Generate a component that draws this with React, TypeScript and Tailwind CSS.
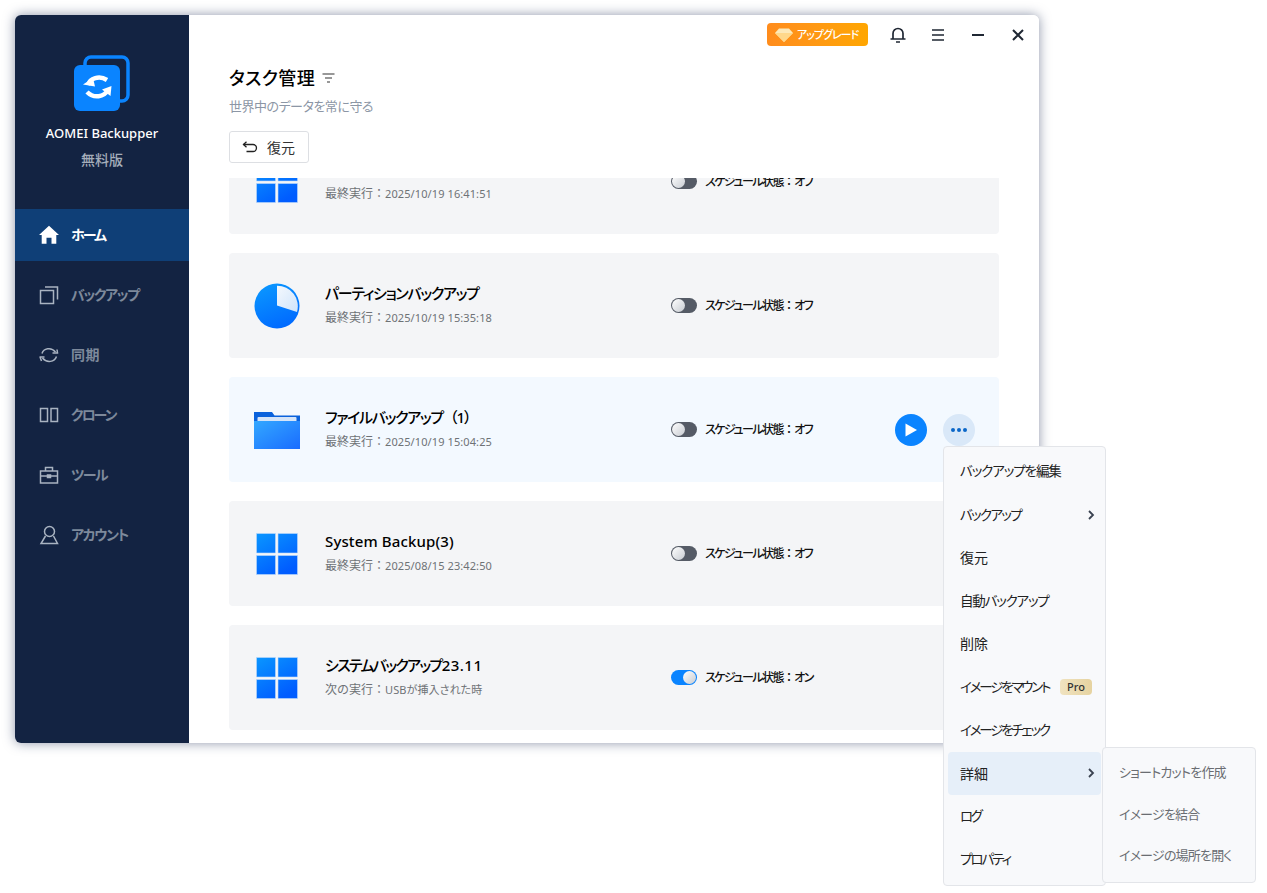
import React from 'react';

const WindowsIcon: React.FC<{ id: string }> = ({ id }) => (
    <svg width="42" height="42" viewBox="0 0 42 42">
        <defs>
            <linearGradient id={id} x1="0" y1="0" x2="0.6" y2="1">
                <stop offset="0" stopColor="#0a96ff" />
                <stop offset="1" stopColor="#005cff" />
            </linearGradient>
        </defs>
        <path fill={`url(#${id})`} stroke="#bcd9fb" strokeWidth="0.6" d="M0.5 0.5h19v19.5h-19zM22 0.5h19.500v19.500H22zM0.500 22.500h19v19h-19zM22 22.500h19.500v19H22z" />
    </svg>
);

const PieIcon = () => (
    <svg width="46" height="46" viewBox="0 0 46 46">
        <defs>
            <linearGradient id="pieBlue" x1="0.3" y1="0" x2="0.7" y2="1">
                <stop offset="0" stopColor="#0a96ff" />
                <stop offset="1" stopColor="#0068ff" />
            </linearGradient>
            <linearGradient id="pieLight" x1="0" y1="0" x2="1" y2="1">
                <stop offset="0" stopColor="#f4f8fd" />
                <stop offset="1" stopColor="#cfe4fb" />
            </linearGradient>
        </defs>
        <circle cx="23" cy="23" r="22.500" fill="url(#pieBlue)" />
        <path d="M23 2.800A20.500 20.500 0 0 1 43 29L23 22.500Z" fill="url(#pieLight)" />
    </svg>
);

const FolderIcon = () => (
    <svg width="46" height="38" viewBox="0 0 46 38">
        <defs>
            <linearGradient id="folderFront" x1="0" y1="0" x2="1" y2="1">
                <stop offset="0" stopColor="#33a8ff" />
                <stop offset="1" stopColor="#1a6cff" />
            </linearGradient>
        </defs>
        <path d="M0 1h18l2.500 3.500H46V20H0Z" fill="#0a62dc" />
        <rect x="3.500" y="6" width="39" height="8" rx="1" fill="#d4e4f8" />
        <path d="M0 10h46V38H0Z" fill="url(#folderFront)" />
    </svg>
);

const LogoIcon = () => (
    <svg width="56" height="56" viewBox="0 0 56 56">
        <rect x="11" y="2" width="43" height="44" rx="6" fill="none" stroke="#0a84ff" strokeWidth="3.500" />
        <rect x="0" y="10" width="46" height="46" rx="6" fill="#0a84ff" />
        <path d="M14 30C16 23.500 25 20 33 25" fill="none" stroke="#fff" strokeWidth="4.500" />
        <path d="M9 29.500l10-6.500 2 8.500z" fill="#fff" />
        <path d="M13 37C20 44 30 42 34 35" fill="none" stroke="#fff" strokeWidth="4.500" />
        <path d="M37.500 31l-1 10-8.500-6.500z" fill="#fff" />
    </svg>
);

const HomeIcon = () => (
    <svg width="20" height="20" viewBox="0 0 20 20" fill="#fff">
        <path d="M10 0.800L20 10h-2.700v8.800h-4.800v-6h-5v6H2.700V10H0Z" />
    </svg>
);

const BackupIcon = () => (
    <svg width="20" height="20" viewBox="0 0 20 20" fill="none" stroke="currentColor" strokeWidth="1.500">
        <rect x="1.500" y="5.500" width="13" height="13" />
        <path d="M6 2h12.500v12.500" />
    </svg>
);

const SyncIcon = () => (
    <svg width="20" height="20" viewBox="0 0 20 20" fill="none" stroke="currentColor" strokeWidth="1.500">
        <path d="M3 8.500C4.500 3.500 12 1.500 16.500 7" />
        <path d="M17.500 11.500C15.500 17 8 18.500 3.500 13" />
        <path d="M13.500 8h5v-.200L18 4.500M0.500 12h5M1 12l1.500 4" />
    </svg>
);

const CloneIcon = () => (
    <svg width="20" height="20" viewBox="0 0 20 20" fill="none" stroke="currentColor" strokeWidth="1.500">
        <rect x="1.500" y="3.500" width="7" height="13" />
        <rect x="12" y="3.500" width="6.500" height="13" />
    </svg>
);

const ToolIcon = () => (
    <svg width="20" height="20" viewBox="0 0 20 20" fill="none" stroke="currentColor" strokeWidth="1.500">
        <rect x="1.500" y="6" width="17" height="12" />
        <path d="M6.500 6V2.500h7V6M1.500 11h17" />
        <rect x="8.500" y="10" width="3" height="2.500" fill="currentColor" />
    </svg>
);

const UserIcon = () => (
    <svg width="20" height="20" viewBox="0 0 20 20" fill="none" stroke="currentColor" strokeWidth="1.500">
        <circle cx="10.500" cy="6.500" r="5" />
        <path d="M6.500 11L2 18.500h16.500L14.500 11" />
    </svg>
);

const navItems = [
    { label: 'バックアップ', icon: <BackupIcon />, cls: 'tracking-[-1.400px]' },
    { label: '同期', icon: <SyncIcon />, cls: 'tracking-[0.500px]' },
    { label: 'クローン', icon: <CloneIcon />, cls: 'tracking-[-2px]' },
    { label: 'ツール', icon: <ToolIcon />, cls: 'tracking-[-1.500px]' },
    { label: 'アカウント', icon: <UserIcon />, cls: 'tracking-[-1.400px]' },
];

const Toggle: React.FC<{ on?: boolean }> = ({ on }) => (
    <div className={`w-[26px] h-[15px] rounded-full flex items-center px-px ${on ? 'bg-[#0a84ff] justify-end' : 'bg-[#555b66] justify-start'}`}>
        <div className="w-[13px] h-[13px] rounded-full bg-gradient-to-br from-white to-[#c8ccd2]" />
    </div>
);

type Task = { title: React.ReactNode; label: string; value: string; on?: boolean; icon: React.ReactNode; active?: boolean };

const tasks: Task[] = [
    { title: '', label: '最終実行：', value: '2025/10/19 16:41:51', icon: <WindowsIcon id="win0" /> },
    {
        title: <span className="tracking-[-1.300px]">パーティションバックアップ</span>,
        label: '最終実行：',
        value: '2025/10/19 15:35:18',
        icon: <PieIcon />,
    },
    {
        title: (
            <>
                <span className="tracking-[-1.300px]">ファイルバックアップ</span>
                <span className="[font-feature-settings:normal] tracking-[-1.500px]">（1）</span>
            </>
        ),
        label: '最終実行：',
        value: '2025/10/19 15:04:25',
        icon: <FolderIcon />,
        active: true,
    },
    {
        title: <span className="tracking-[0.130px]">System Backup(3)</span>,
        label: '最終実行：',
        value: '2025/08/15 23:42:50',
        icon: <WindowsIcon id="win1" />,
    },
    {
        title: (
            <>
                <span className="tracking-[-1.700px]">システムバックアップ</span>
                <span className="tracking-[0.500px]">23.11</span>
            </>
        ),
        label: '次の実行：',
        value: 'USBが挿入された時',
        icon: <WindowsIcon id="win2" />,
        on: true,
    },
];

const menuItems = [
    { label: 'バックアップを編集', cls: 'text-[13.500px] tracking-[-1.100px]' },
    { label: 'バックアップ', cls: 'text-[13.500px] tracking-[-1.700px]' },
    { label: '復元', cls: 'text-[14px]' },
    { label: '自動バックアップ', cls: 'text-[13.500px] tracking-[-1.200px]' },
    { label: '削除', cls: 'text-[14px]' },
    { label: 'イメージをマウント', cls: 'text-[13.500px] tracking-[-2.200px]' },
    { label: 'イメージをチェック', cls: 'text-[13.500px] tracking-[-2.200px]' },
    { label: '詳細', cls: 'text-[14px]' },
    { label: 'ログ', cls: 'text-[13.500px] tracking-[-2.500px]' },
    { label: 'プロパティ', cls: 'text-[13.500px] tracking-[-2px]' },
];

const Chevron = () => (
    <svg width="8" height="10" viewBox="0 0 8 10" fill="none" stroke="#3a4250" strokeWidth="1.800">
        <path d="M2 1l4 4-4 4" />
    </svg>
);

const App: React.FC = () => {
    return (
        <div className="relative h-[893px] overflow-hidden bg-white pl-[15px] pt-[15px] font-['Noto_Sans','Noto_Sans_CJK_JP',sans-serif] [font-feature-settings:'palt']">
            <div className="flex w-[1024px] h-[728px] rounded-md overflow-hidden shadow-[0_0_12px_rgba(30,45,85,0.5)]">
                <aside className="w-[174px] shrink-0 bg-[#132342] flex flex-col">
                    <div className="flex flex-col items-center pt-[40px]">
                        <div className="mr-[1px]"><LogoIcon /></div>
                        <div className="mt-[12px] text-[13px] leading-[20px] font-medium text-white">AOMEI Backupper</div>
                        <div className="mt-[7px] text-[14px] leading-[20px] font-medium text-[#a4adba]">無料版</div>
                    </div>
                    <nav className="mt-[35px] flex flex-col">
                        <div className="h-[52px] my-[4px] flex items-center gap-[12px] pl-[24px] bg-[#0f3f77] text-white">
                            <HomeIcon />
                            <span className="pb-[2px] text-[14px] font-bold tracking-[-2px]">ホーム</span>
                        </div>
                        {navItems.map(item => (
                            <div key={item.label} className="h-[52px] my-[4px] flex items-center gap-[12px] pl-[24px] text-[#a9b3c1]">
                                {item.icon}
                                <span className={`pb-[2px] text-[14px] font-bold text-[#7d899b] ${item.cls}`}>{item.label}</span>
                            </div>
                        ))}
                    </nav>
                </aside>

                <main className="flex-1 bg-white flex flex-col min-w-0">
                    <div className="h-[163px] shrink-0 relative pl-[40px]">
                        <div className="absolute top-[8px] right-[14px] flex items-center">
                            <div className="h-[23px] w-[101px] rounded-[4px] bg-gradient-to-r from-[#ff8c1c] to-[#ffa600] flex items-center pl-[8px] gap-[4px]">
                                <svg width="18" height="14" viewBox="0 0 18 14">
                                    <path d="M4 0.500h10l4 4.500-9 9-9-9z" fill="#fde9b8" />
                                    <path d="M0 5h18l-9 9z" fill="#ffd88a" />
                                </svg>
                                <span className="text-[11px] leading-none text-white font-medium tracking-[-1px]">アップグレード</span>
                            </div>
                            <svg className="ml-[21px]" width="18" height="18" viewBox="0 0 18 18" fill="none" stroke="#1f2733" strokeWidth="1.700">
                                <path d="M4 12.500V7.500a5 5 0 0 1 10 0v5M1.500 13h15" />
                                <path d="M7 16h4" />
                            </svg>
                            <svg className="ml-[24px]" width="14" height="14" viewBox="0 0 14 14" fill="none" stroke="#1f2733" strokeWidth="1.700">
                                <path d="M1 2h12M1 7h12M1 12h12" />
                            </svg>
                            <svg className="ml-[26px]" width="14" height="14" viewBox="0 0 14 14" fill="none" stroke="#1f2733" strokeWidth="1.800">
                                <path d="M1 7h12" />
                            </svg>
                            <svg className="ml-[26px]" width="14" height="14" viewBox="0 0 14 14" fill="none" stroke="#1f2733" strokeWidth="2">
                                <path d="M2 2l10 10M12 2L2 12" />
                            </svg>
                        </div>
                        <div className="pt-[50px] flex items-center gap-[7px]">
                            <h1 className="text-[18px] leading-[26px] font-medium text-black tracking-[0.400px]">タスク管理</h1>
                            <svg width="13" height="10" viewBox="0 0 13 10" fill="none" stroke="#333" strokeWidth="1.200">
                                <path d="M0.500 1h12M3 5h7M5 9h3" />
                            </svg>
                        </div>
                        <p className="mt-[5px] text-[13px] leading-[20px] text-[#8c96a5] tracking-[-0.500px]">世界中のデータを常に守る</p>
                        <button className="mt-[15px] h-[32px] w-[80px] border border-[#dddfe3] rounded-[3px] flex items-center pl-[12px] gap-[9px] text-[14px] text-[#333]">
                            <svg width="16" height="12" viewBox="0 0 16 12" fill="none" stroke="#222" strokeWidth="1.300">
                                <path d="M1.500 3.500H11a3.500 3.500 0 0 1 0 7H4.500" />
                                <path d="M4.500 0.800L1.500 3.500l3 2.700" />
                            </svg>
                            復元
                        </button>
                    </div>

                    <div className="flex-1 overflow-hidden pl-[40px]">
                        <div className="mt-[-49px] w-[770px] flex flex-col gap-[19px]">
                            {tasks.map((task, index) => (
                                <div key={index} className={`h-[105px] rounded-[4px] flex items-center pl-[25px] pr-[24px] ${task.active ? 'bg-[#f3f9ff]' : 'bg-[#f4f5f7]'}`}>
                                    <div className="w-[46px] flex justify-center">{task.icon}</div>
                                    <div className="ml-[25px] w-[346px]">
                                        <div className="text-[15px] leading-[24px] font-medium text-black h-[24px] mb-px">{task.title}</div>
                                        <div className="text-[12px] leading-[24px] text-[#6e7276]">
                                            <span className="[font-feature-settings:normal]">{task.label}</span>
                                            <span className="text-[11px] tracking-[0.100px]">{task.value}</span>
                                        </div>
                                    </div>
                                    <Toggle on={task.on} />
                                    <span className="ml-[8px] text-[12px] font-medium text-[#111] tracking-[-1.500px]">
                                        スケジュール状態<span className="[font-feature-settings:normal] tracking-[-1px]">：</span>{task.on ? 'オン' : 'オフ'}
                                    </span>
                                    {task.active && (
                                        <div className="ml-auto flex gap-[16px]">
                                            <div className="w-[32px] h-[32px] rounded-full bg-[#0a84ff] flex items-center justify-center">
                                                <svg width="14" height="14" viewBox="0 0 14 14"><path d="M1.500 0.500L13 7 1.500 13.500Z" fill="#fff" /></svg>
                                            </div>
                                            <div className="w-[32px] h-[32px] rounded-full bg-[#d9e8f8] flex items-center justify-center gap-[2px]">
                                                <span className="w-[4px] h-[4px] rounded-full bg-[#0a66c8]" />
                                                <span className="w-[4px] h-[4px] rounded-full bg-[#0a66c8]" />
                                                <span className="w-[4px] h-[4px] rounded-full bg-[#0a66c8]" />
                                            </div>
                                        </div>
                                    )}
                                </div>
                            ))}
                        </div>
                    </div>
                </main>
            </div>

            <div className="absolute left-[943px] top-[446px] w-[163px] h-[440px] bg-[#f8f9fb] border border-[#e3e5e9] rounded-[4px] px-[4px] pt-[3px]">
                {menuItems.map(item => (
                    <div key={item.label} className={`h-[43.100px] rounded-[4px] flex items-center pl-[12px] pr-[6px] text-[#222] whitespace-nowrap ${item.label === '詳細' ? 'bg-[#e6eff9]' : ''}`}>
                        <span className={item.cls}>{item.label}</span>
                        {(item.label === 'バックアップ' || item.label === '詳細') && <span className="ml-auto"><Chevron /></span>}
                        {item.label === 'イメージをマウント' && (
                            <span className="ml-auto mr-[3px] w-[32px] h-[16px] rounded-[4px] bg-gradient-to-r from-[#f0e3c0] to-[#e6d3a0] flex items-center justify-center text-[11px] font-medium text-[#333]">Pro</span>
                        )}
                    </div>
                ))}
            </div>

            <div className="absolute left-[1102px] top-[747px] w-[154px] h-[136px] bg-[#f8f9fb] border border-[#e3e5e9] rounded-[4px] pl-[16px] pt-[4px]">
                {['ショートカットを作成', 'イメージを結合', 'イメージの場所を開く'].map(item => (
                    <div key={item} className="h-[41.500px] flex items-center text-[13px] tracking-[-0.800px] text-[#6a6d72] whitespace-nowrap">{item}</div>
                ))}
            </div>
        </div>
    );
};

export default App;
